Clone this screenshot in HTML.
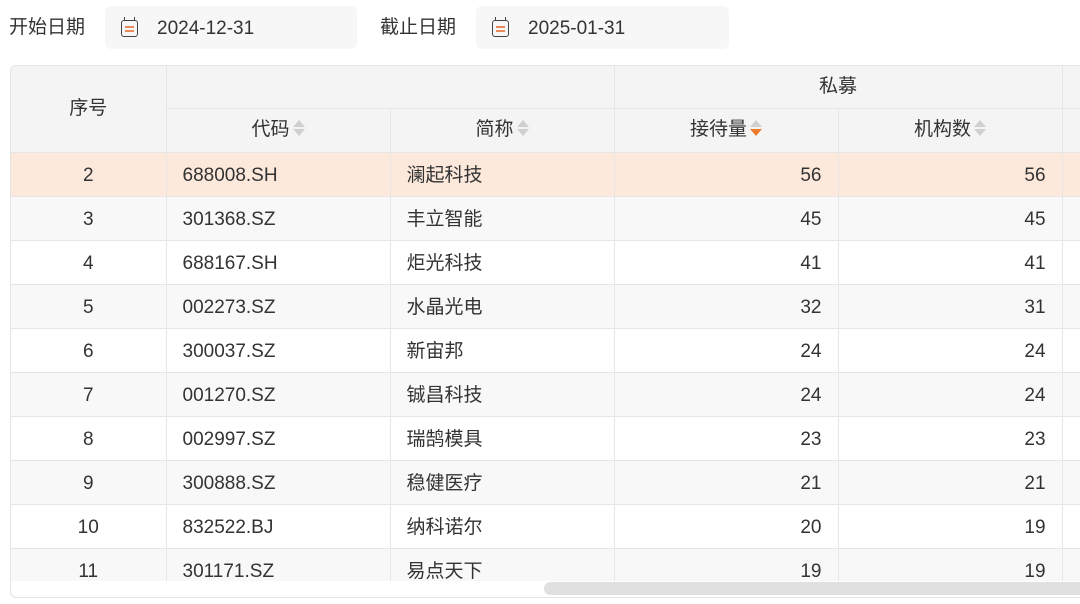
<!DOCTYPE html>
<html><head><meta charset="utf-8"><style>
*{margin:0;padding:0;box-sizing:border-box}
body{width:1080px;height:604px;background:#fff;overflow:hidden;font-family:"Liberation Sans","Noto Sans CJK SC",sans-serif;color:#333;position:relative}
.lbl{position:absolute;top:15px;font-size:19px;color:#333;line-height:26px}
.inp{position:absolute;top:6px;height:43px;background:#f7f7f7;border-radius:6px;font-size:19px;line-height:45px;padding-left:52px;color:#333}
.ico{position:absolute;left:16px;top:14px;width:17px;height:17px;border:1.6px solid #444;border-radius:3px}
.ico:before{content:"";position:absolute;left:3px;right:3px;top:5px;height:2px;background:#e8895a;box-shadow:0 4px 0 #e8895a}
.ico:after{content:"";position:absolute;left:2px;right:2px;top:-4px;height:3px;border-left:1.6px solid #444;border-right:1.6px solid #444}
.wrap{position:absolute;left:10px;top:65px;width:1090px;height:533px;border:1px solid #e4e4e4;border-radius:6px;overflow:hidden}
.clip{position:absolute;left:0;top:0;width:1100px;height:515px;overflow:hidden}
table{border-collapse:collapse;table-layout:fixed;font-size:19px;width:1111px}
td,th{border-right:1px solid #e6e6e6;border-bottom:1px solid #e6e6e6;height:44px;padding:0 16px;white-space:nowrap;font-weight:normal;line-height:20px;vertical-align:middle}
td{padding-top:3px}
th{background:#f4f4f5;text-align:center;color:#333}
tr.hl td{background:#fde9dc}
tr.g td{background:#f8f8f8}
.c{text-align:center}.r{text-align:right}
.s{display:inline-block;width:12px;height:16px;vertical-align:-1px;margin-left:3px;position:relative}
.s:before,.s:after{content:"";position:absolute;left:0;border-left:6px solid transparent;border-right:6px solid transparent}
.s:before{top:0;border-bottom:7px solid #d0d0d0}
.s:after{bottom:0;border-top:7px solid #d0d0d0}
.s.o:after{border-top-color:#ee7a2e}
.sb{position:absolute;left:533px;top:516px;width:560px;height:13px;background:#e0e0e0;border-radius:7px}
</style></head><body>
<div class="lbl" style="left:9px">开始日期</div>
<div class="inp" style="left:105px;width:252px"><span class="ico"></span>2024-12-31</div>
<div class="lbl" style="left:380px">截止日期</div>
<div class="inp" style="left:476px;width:253px"><span class="ico"></span>2025-01-31</div>
<div class="wrap"><div class="clip">
<table>
<colgroup><col style="width:155px"><col style="width:224px"><col style="width:224px"><col style="width:224px"><col style="width:224px"><col style="width:60px"></colgroup>
<tr style="height:42px"><th rowspan="2" style="height:86px">序号</th><th colspan="2" style="height:42px"></th><th colspan="2" style="height:42px">私募</th><th style="height:42px"></th></tr>
<tr style="height:44px"><th style="height:44px">代码<span class="s"></span></th><th style="height:44px">简称<span class="s"></span></th><th style="height:44px">接待量<span class="s o"></span></th><th style="height:44px">机构数<span class="s"></span></th><th style="height:44px"></th></tr>
<tr class="hl"><td class="c">2</td><td>688008.SH</td><td>澜起科技</td><td class="r">56</td><td class="r">56</td><td></td></tr>
<tr class="g"><td class="c">3</td><td>301368.SZ</td><td>丰立智能</td><td class="r">45</td><td class="r">45</td><td></td></tr>
<tr><td class="c">4</td><td>688167.SH</td><td>炬光科技</td><td class="r">41</td><td class="r">41</td><td></td></tr>
<tr class="g"><td class="c">5</td><td>002273.SZ</td><td>水晶光电</td><td class="r">32</td><td class="r">31</td><td></td></tr>
<tr><td class="c">6</td><td>300037.SZ</td><td>新宙邦</td><td class="r">24</td><td class="r">24</td><td></td></tr>
<tr class="g"><td class="c">7</td><td>001270.SZ</td><td>铖昌科技</td><td class="r">24</td><td class="r">24</td><td></td></tr>
<tr><td class="c">8</td><td>002997.SZ</td><td>瑞鹄模具</td><td class="r">23</td><td class="r">23</td><td></td></tr>
<tr class="g"><td class="c">9</td><td>300888.SZ</td><td>稳健医疗</td><td class="r">21</td><td class="r">21</td><td></td></tr>
<tr><td class="c">10</td><td>832522.BJ</td><td>纳科诺尔</td><td class="r">20</td><td class="r">19</td><td></td></tr>
<tr class="g"><td class="c">11</td><td>301171.SZ</td><td>易点天下</td><td class="r">19</td><td class="r">19</td><td></td></tr>
</table></div>
<div class="sb"></div>
</div>
</body></html>
